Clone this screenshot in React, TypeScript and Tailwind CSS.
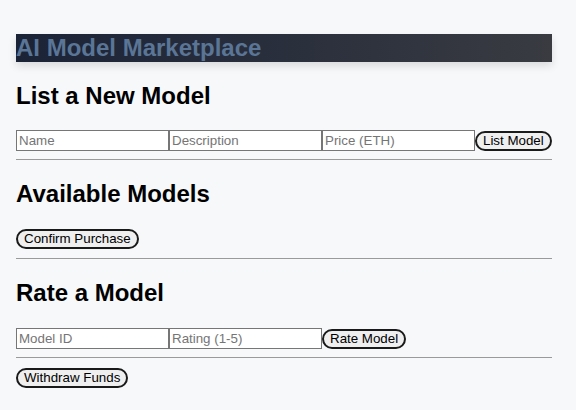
export default function App() {
  const font = { fontFamily: '"Liberation Sans", Arial, sans-serif' };
  return (
    <div className="min-h-[410px] bg-[#f7f8fa] pl-4 pr-6 pt-[34px] text-black" style={font}>
      {/* header */}
      <h1 className="h-[28px] bg-gradient-to-r from-[#1b2337] to-[#393b41] text-[24px] font-bold leading-[28px] text-[#5a7595] shadow-[0_4px_8px_rgba(0,0,0,0.12)]">
        AI Model Marketplace
      </h1>

      {/* list */}
      <h2 className="mt-5 text-[24px] font-bold leading-[28px]">List a New Model</h2>
      <div className="mt-5 flex items-center">
        <input
          placeholder="Name"
          className="h-[21px] w-[153px] border border-[#767676] bg-white px-0.5 text-[13.33px] placeholder:text-[#757575]"
        />
        <input
          placeholder="Description"
          className="h-[21px] w-[153px] border border-[#767676] bg-white px-0.5 text-[13.33px] placeholder:text-[#757575]"
        />
        <input
          placeholder="Price (ETH)"
          className="h-[21px] w-[153px] border border-[#767676] bg-white px-0.5 text-[13.33px] placeholder:text-[#757575]"
        />
        <button className="rounded-full border-2 border-[#1a1a1a] bg-[#efefef] px-1.5 py-px text-[13.33px] leading-[14px]">
          List Model
        </button>
      </div>
      <hr className="mt-2 border-t border-[#9a9a9a]" />

      {/* available */}
      <h2 className="mt-5 text-[24px] font-bold leading-[28px]">Available Models</h2>
      <div className="mt-[21px] flex">
        <button className="rounded-full border-2 border-[#1a1a1a] bg-[#efefef] px-1.5 py-px text-[13.33px] leading-[14px]">
          Confirm Purchase
        </button>
      </div>
      <hr className="mt-[9px] border-t border-[#9a9a9a]" />

      {/* rate */}
      <h2 className="mt-5 text-[24px] font-bold leading-[28px]">Rate a Model</h2>
      <div className="mt-[21px] flex items-center">
        <input
          placeholder="Model ID"
          className="h-[21px] w-[153px] border border-[#767676] bg-white px-0.5 text-[13.33px] placeholder:text-[#757575]"
        />
        <input
          placeholder="Rating (1-5)"
          className="h-[21px] w-[153px] border border-[#767676] bg-white px-0.5 text-[13.33px] placeholder:text-[#757575]"
        />
        <button className="rounded-full border-2 border-[#1a1a1a] bg-[#efefef] px-1.5 py-px text-[13.33px] leading-[14px]">
          Rate Model
        </button>
      </div>
      <hr className="mt-2 border-t border-[#9a9a9a]" />
      <div className="mt-[10px] flex">
        <button className="rounded-full border-2 border-[#1a1a1a] bg-[#efefef] px-1.5 py-px text-[13.33px] leading-[14px]">
          Withdraw Funds
        </button>
      </div>
    </div>
  );
}
